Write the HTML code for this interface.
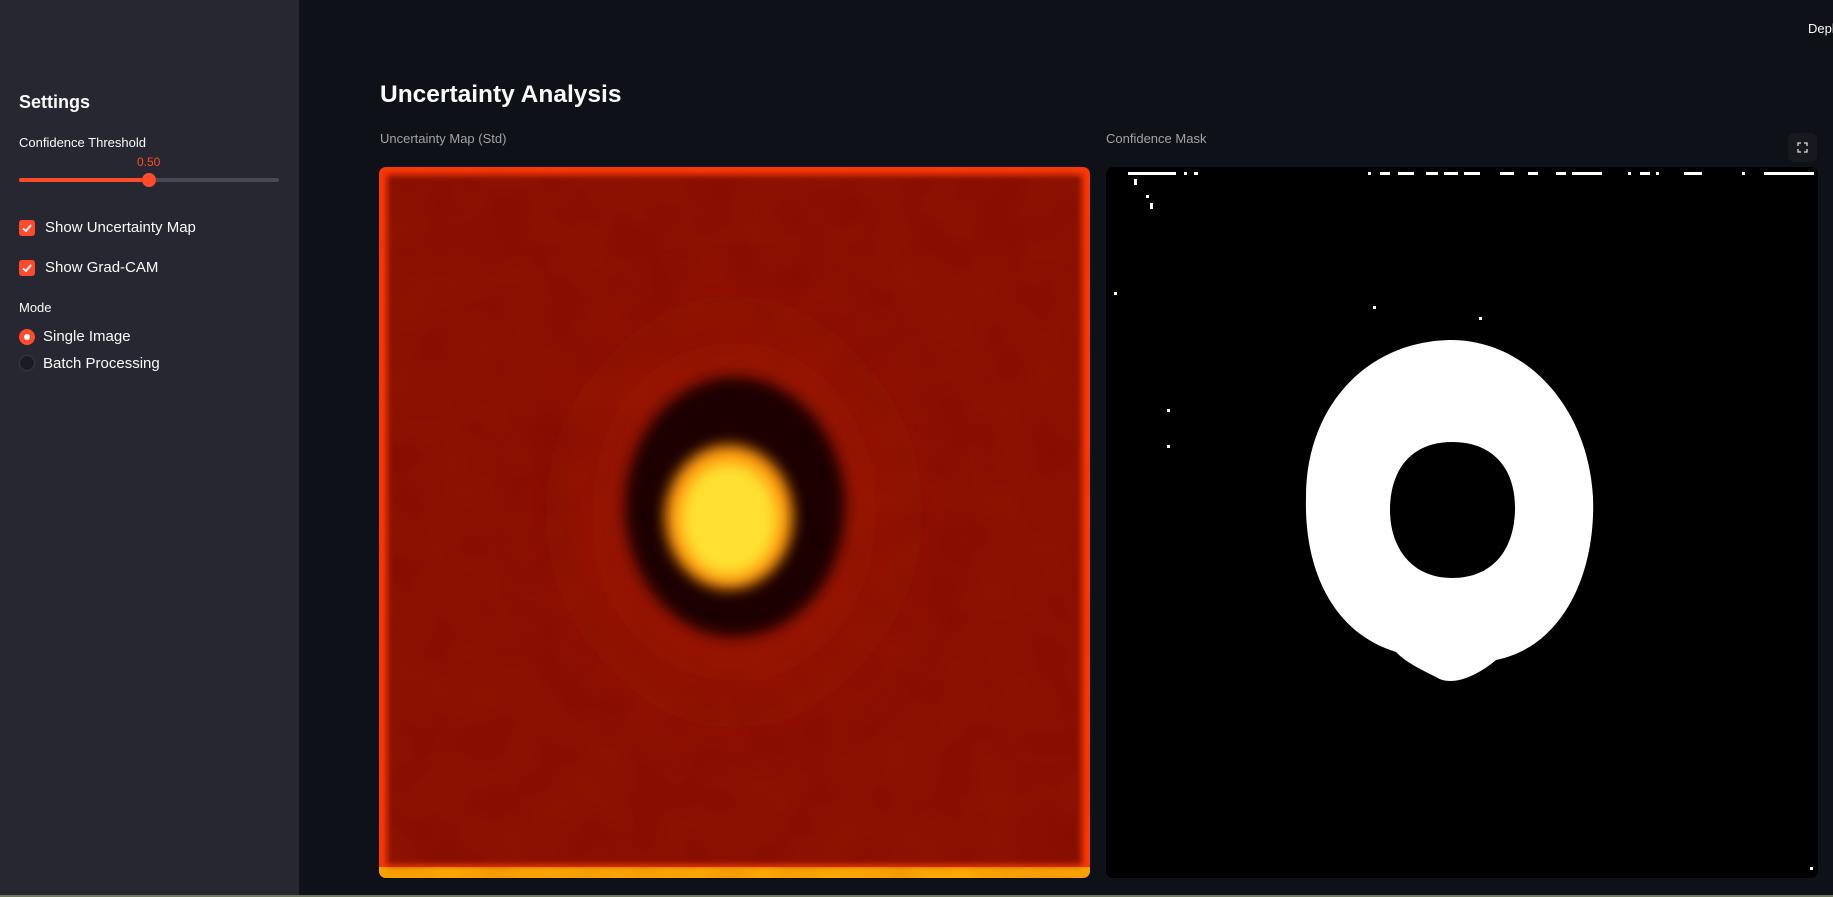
<!DOCTYPE html>
<html><head><meta charset="utf-8"><style>
*{margin:0;padding:0;box-sizing:border-box}
body{width:1833px;height:897px;overflow:hidden;background:#0e1117;font-family:"Source Sans Pro","Liberation Sans",sans-serif;color:#fafafa;position:relative}
.sb{position:absolute;left:0;top:0;width:299px;height:897px;background:#262730}
.a{position:absolute;white-space:nowrap}
.cb{position:absolute;width:16px;height:16px;background:#ff4b2b;border-radius:3px}
.cb svg{position:absolute;left:2px;top:2px}
</style></head><body>
<div class="sb">
  <div class="a" style="left:19px;top:92px;font-size:18px;font-weight:bold">Settings</div>
  <div class="a" style="left:19px;top:135px;font-size:13px">Confidence Threshold</div>
  <div class="a" style="left:137px;top:155px;font-size:12px;color:#ff4b2b">0.50</div>
  <div style="position:absolute;left:19px;top:178px;width:260px;height:4px;border-radius:2px;background:#4a4b52"></div>
  <div style="position:absolute;left:19px;top:178px;width:130px;height:4px;border-radius:2px;background:#ff4b2b"></div>
  <div style="position:absolute;left:142px;top:173px;width:14px;height:14px;border-radius:50%;background:#ff4b2b"></div>
  <div class="cb" style="left:19px;top:220px"><svg width="12" height="12" viewBox="0 0 12 12"><path d="M2 6.5L5 9L10 3" stroke="#fff" stroke-width="2" fill="none"/></svg></div>
  <div class="a" style="left:45px;top:219px;font-size:15px">Show Uncertainty Map</div>
  <div class="cb" style="left:19px;top:260px"><svg width="12" height="12" viewBox="0 0 12 12"><path d="M2 6.5L5 9L10 3" stroke="#fff" stroke-width="2" fill="none"/></svg></div>
  <div class="a" style="left:45px;top:259px;font-size:15px">Show Grad-CAM</div>
  <div class="a" style="left:19px;top:300px;font-size:13px">Mode</div>
  <div style="position:absolute;left:19px;top:329px;width:16px;height:16px;border-radius:50%;background:#ff4b2b"><div style="position:absolute;left:5px;top:5px;width:6px;height:6px;border-radius:50%;background:#fff"></div></div>
  <div class="a" style="left:43px;top:328px;font-size:15px">Single Image</div>
  <div style="position:absolute;left:19px;top:355px;width:16px;height:16px;border-radius:50%;background:#1b1c22;border:1px solid #3a3b42"></div>
  <div class="a" style="left:43px;top:355px;font-size:15px">Batch Processing</div>
</div>
<div class="a" style="left:1808px;top:21px;font-size:13px">Depl</div>
<div class="a" style="left:380px;top:81px;font-size:24.5px;font-weight:bold">Uncertainty Analysis</div>
<div class="a" style="left:380px;top:131px;font-size:13px;color:#a3a3a8">Uncertainty Map (Std)</div>
<div class="a" style="left:1106px;top:131px;font-size:13px;color:#a3a3a8">Confidence Mask</div>
<div style="position:absolute;left:1788px;top:133px;width:29px;height:29px;border-radius:6px;background:#17191f"><svg width="29" height="29" viewBox="0 0 29 29"><path d="M10 13V10H13M16 10H19V13M19 16V19H16M13 19H10V16" stroke="#ddd" stroke-width="1.3" fill="none"/></svg></div>

<svg style="position:absolute;left:379px;top:167px" width="711" height="711" viewBox="0 0 711 711">
<defs>
<filter id="b1" x="-50%" y="-50%" width="200%" height="200%"><feGaussianBlur stdDeviation="35"/></filter>
<filter id="b2"><feGaussianBlur stdDeviation="7"/></filter>
<filter id="b0"><feGaussianBlur stdDeviation="3"/></filter>
<filter id="n"><feTurbulence type="fractalNoise" baseFrequency="0.02" numOctaves="2" seed="3"/><feColorMatrix values="0 0 0 0 0.5  0 0 0 0 0.03  0 0 0 0 0  0 0 0 0.35 0"/></filter>
<clipPath id="c1"><rect width="711" height="711" rx="7"/></clipPath>
</defs>
<g clip-path="url(#c1)">
<rect width="711" height="711" fill="#ff3a08"/>
<rect x="0" y="700" width="711" height="11" fill="#ffb000"/>
<rect x="8" y="8" width="695" height="690" fill="#850d02" filter="url(#b0)"/>
<rect x="8" y="8" width="695" height="690" filter="url(#n)" opacity="0.6"/>
<ellipse cx="355" cy="345" rx="165" ry="195" fill="#a01803" filter="url(#b1)" opacity="0.55"/>
<ellipse cx="356" cy="340" rx="110" ry="130" fill="#1e0200" filter="url(#b2)"/>
<ellipse cx="350" cy="350" rx="64" ry="72" fill="#ff9a10" filter="url(#b2)"/>
<ellipse cx="350" cy="352" rx="48" ry="56" fill="#ffe030" filter="url(#b2)"/>
</g>
</svg>

<svg style="position:absolute;left:1106px;top:167px" width="712" height="711" viewBox="0 0 712 711">
<defs><clipPath id="c2"><rect width="712" height="711" rx="7"/></clipPath></defs>
<g clip-path="url(#c2)">
<rect width="712" height="711" fill="#000"/>
<path fill="#fff" fill-rule="evenodd" d="M343 173C420 172 482 240 487 330C490 410 455 480 390 493C370 510 345 520 330 510C310 500 300 495 290 485C225 465 198 400 200 330C200 240 260 175 343 173Z M346 275C390 275 410 305 409 343C408 385 385 411 346 411C305 411 284 380 284 343C284 303 305 275 346 275Z"/>
<g fill="#fff">
<rect x="22" y="5" width="48" height="3"/><rect x="78" y="5" width="3" height="3"/><rect x="88" y="5" width="4" height="3"/>
<rect x="262" y="5" width="3" height="3"/><rect x="274" y="5" width="10" height="3"/><rect x="292" y="5" width="16" height="3"/>
<rect x="320" y="5" width="12" height="3"/><rect x="338" y="5" width="14" height="3"/><rect x="358" y="5" width="16" height="3"/>
<rect x="394" y="5" width="14" height="3"/><rect x="422" y="5" width="10" height="3"/><rect x="450" y="5" width="10" height="3"/><rect x="466" y="5" width="30" height="3"/>
<rect x="522" y="5" width="3" height="3"/><rect x="534" y="5" width="10" height="3"/><rect x="550" y="5" width="3" height="3"/>
<rect x="578" y="5" width="18" height="3"/><rect x="636" y="5" width="3" height="3"/><rect x="658" y="5" width="50" height="3"/>
<rect x="28" y="12" width="3" height="6"/><rect x="40" y="28" width="3" height="3"/><rect x="44" y="36" width="3" height="6"/>
<rect x="8" y="125" width="3" height="3"/><rect x="61" y="242" width="3" height="3"/><rect x="61" y="278" width="3" height="3"/>
<rect x="267" y="139" width="3" height="3"/><rect x="373" y="150" width="3" height="3"/><rect x="704" y="700" width="3" height="3"/>
</g>
</g>
</svg>
<div style="position:absolute;left:0;top:895px;width:1833px;height:2px;background:#6a7a5a"></div>
</body></html>
